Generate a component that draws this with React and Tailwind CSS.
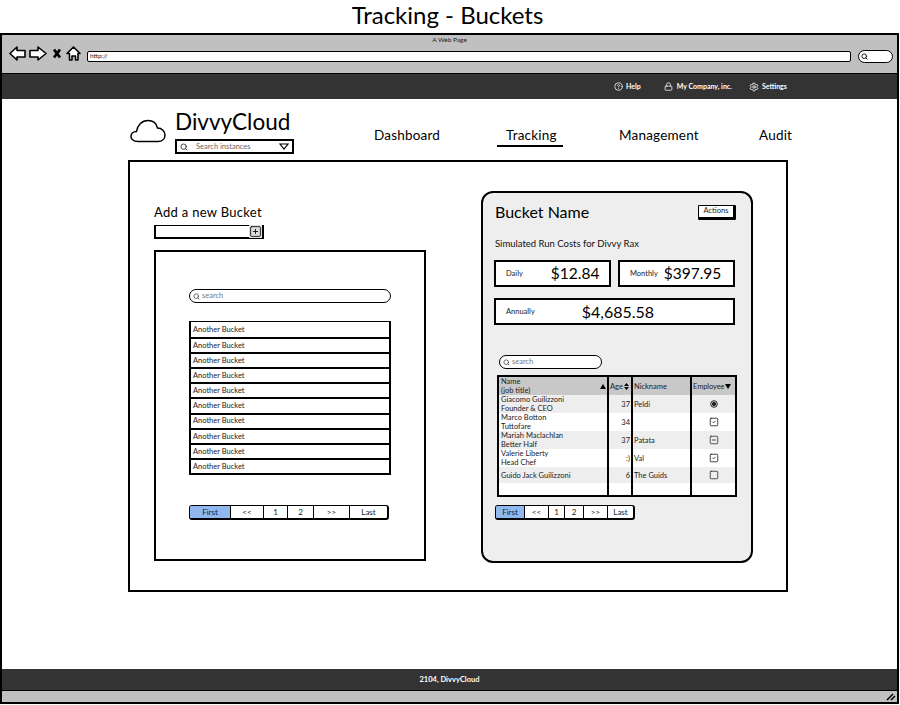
import { CircleHelp, Lock, Search, Settings, Square, SquareCheck, SquareMinus, SquarePlus } from 'lucide-react';

const navItems = [
  { label: 'Dashboard', className: 'w-[132px]' },
  { label: 'Tracking', className: 'w-[113px]' },
  { label: 'Management', className: 'w-[140px]' },
  { label: 'Audit', className: 'w-[31px]' },
];

const people = [
  { name: 'Giacomo Guilizzoni', role: 'Founder & CEO', age: '37', nick: 'Peldi', icon: 'radio', shaded: true },
  { name: 'Marco Botton', role: 'Tuttofare', age: '34', nick: '', icon: 'check' },
  { name: 'Mariah Maclachlan', role: 'Better Half', age: '37', nick: 'Patata', icon: 'minus', shaded: true },
  { name: 'Valerie Liberty', role: 'Head Chef', age: ':)', nick: 'Val', icon: 'check' },
  { name: 'Guido Jack Guilizzoni', role: '', age: '6', nick: 'The Guids', icon: 'empty', shaded: true, short: true },
];

const bigPager = [
  { label: 'First', className: 'w-[40px]' },
  { label: '<<', className: 'w-[33px]' },
  { label: '1', className: 'w-[24px]' },
  { label: '2', className: 'w-[26px]' },
  { label: '>>', className: 'w-[36px]' },
  { label: 'Last', className: 'w-[38px]' },
];

const smallPager = [
  { label: 'First', className: 'w-[28px]' },
  { label: '<<', className: 'w-[24px]' },
  { label: '1', className: 'w-[16px]' },
  { label: '2', className: 'w-[19px]' },
  { label: '>>', className: 'w-[24px]' },
  { label: 'Last', className: 'w-[26px]' },
];

const Pager = ({ items, className }) => (
  <div className={`flex w-fit h-[15px] rounded-[3px] border border-black border-b-2 border-r-2 bg-white overflow-hidden text-[8px] text-[#222] ${className}`}>
    {items.map((item, index) => (
      <div
        key={item.label}
        className={`flex items-center justify-center ${item.className} ${index === 0 ? 'bg-[#8fb8ee]' : 'border-l border-black'}`}
      >
        {item.label}
      </div>
    ))}
  </div>
);

const SearchPill = ({ className }) => (
  <div className={`flex items-center gap-[2px] h-[14px] rounded-full border-[1.5px] border-black bg-white pl-[3px] text-[7.5px] text-[#777] ${className}`}>
    <Search size={7} strokeWidth={2.5} className="text-[#444]" />
    <span>search</span>
  </div>
);

const StatBox = ({ label, value, className, valueClass }) => (
  <div className={`flex items-center border-2 border-black bg-white h-[27px] ${className}`}>
    <span className="text-[7.5px] text-[#222]">{label}</span>
    <span className={`text-black ${valueClass}`}>{value}</span>
  </div>
);

const StateIcon = ({ type }) => {
  if (type === 'radio') {
    return (
      <svg width="8" height="8" viewBox="0 0 8 8" fill="none" stroke="#222" strokeWidth="1">
        <circle cx="4" cy="4" r="3.300" />
        <circle cx="4" cy="4" r="1.700" fill="#222" />
      </svg>
    );
  }
  if (type === 'check') return <SquareCheck size={10} strokeWidth={2} />;
  if (type === 'minus') return <SquareMinus size={10} strokeWidth={1.8} />;
  return <Square size={10} strokeWidth={1.8} />;
};

const BrowserChrome = () => (
  <div className="relative h-[39px] bg-[#c0c0c0] border-b border-black shrink-0">
    <div className="pt-[1px] text-center text-[6.5px] leading-[8px] text-[#222]">A Web Page</div>
    <div className="flex items-start pl-[7px] pr-[4px] pt-[1px]">
      <svg width="72" height="17" viewBox="0 0 72 17" fill="white" stroke="black" strokeWidth="1.6" strokeLinejoin="round" className="shrink-0">
        <path d="M1 8.500 8 2v3.500h8v6.500H8v3z" />
        <path d="M37 8.500 29 2v3.500h-8v6.500h8v3z" />
        <path d="M45 4.500l6 8M51 4.500l-6 8" fill="none" strokeWidth="2.8" />
        <path d="M58 8.500 64.500 2 71 8.500h-2v6.500h-2.500v-4h-3.500v4h-2.500V8.500z" />
      </svg>
      <div className="ml-[6px] mt-[6px] flex-1 h-[11px] rounded-[2px] border-[1.5px] border-black bg-white pl-[2px] text-[6.5px] leading-[7px] text-[#222]">
        http://
      </div>
      <div className="ml-[7px] mt-[5px] flex items-center w-[35px] h-[13px] rounded-full border-[1.5px] border-black bg-white pl-[2px]">
        <Search size={7} strokeWidth={3} />
      </div>
    </div>
  </div>
);

const TopBar = () => (
  <div className="flex items-center h-[25px] bg-[#333] pl-[612px] text-[7px] font-bold text-white shrink-0">
    <CircleHelp size={9} />
    <span className="ml-[3px]">Help</span>
    <Lock size={9} className="ml-[23px]" />
    <span className="ml-[4px]">My Company, inc.</span>
    <Settings size={10} className="ml-[17px]" />
    <span className="ml-[3px]">Settings</span>
  </div>
);

const Logo = () => (
  <div className="flex">
    <svg width="36" height="24" viewBox="0 0 36 24" fill="none" stroke="black" strokeWidth="1.5" className="mt-[10px]">
      <path d="M8 22.500C3 22.500 1 19.500 1 17.500c0-3 2.500-5 5.500-5C7.500 6 12 1.500 18 1.500c5 0 8.500 3 9.500 7.500 4.500 0 7.500 3.500 7.500 7 0 4-3 6.500-7 6.500z" />
    </svg>
    <div className="ml-[9px] w-[119px]">
      <div className="text-[22.5px] leading-[26px] h-[26px] text-black">DivvyCloud</div>
      <div className="mt-[4px] flex items-center w-[119px] h-[15px] border-2 border-black bg-white pl-[3px] pr-[3px] text-[7.5px] text-[#666]">
        <Search size={8} strokeWidth={2.5} className="text-[#222]" />
        <span className="ml-[8px] flex-1">Search instances</span>
        <svg width="10" height="7" viewBox="0 0 10 7" fill="none" stroke="black" strokeWidth="1.2">
          <path d="M1 1h8L5 6z" />
        </svg>
      </div>
    </div>
  </div>
);

const Nav = () => (
  <div className="ml-[80px] flex pt-[28px] text-[13.5px] leading-[16px] tracking-[0.2px] text-black">
    {navItems.map((item) => (
      <div key={item.label} className={`relative whitespace-nowrap ${item.className}`}>
        {item.label}
        {item.label === 'Tracking' && (
          <div className="absolute left-[-9px] top-[18px] w-[66px] h-[1.5px] bg-black" />
        )}
      </div>
    ))}
  </div>
);

const LeftColumn = () => (
  <div className="w-[272px] pt-[42px] shrink-0">
    <div className="text-[13px] leading-[16px] tracking-[0.3px] text-black">Add a new Bucket</div>
    <div className="mt-[5px] flex items-center justify-end w-[110px] h-[14px] border-2 border-black border-t-[1.5px] bg-white">
      <SquarePlus size={13} strokeWidth={1.5} className="bg-[#ddd]" />
    </div>
    <div className="mt-[11px] h-[311px] border-2 border-black bg-white pl-[33px] pt-[37px]">
      <SearchPill className="w-[202px]" />
      <div className="mt-[18px] w-[202px] border-2 border-black border-t-[1.5px]">
        {Array.from({ length: 10 }).map((_, index) => (
          <div
            key={index}
            className={`flex items-center h-[15.1px] pl-[2px] text-[7.5px] text-[#222] ${index > 0 ? 'border-t-2 border-black' : ''}`}
          >
            Another Bucket
          </div>
        ))}
      </div>
      <Pager items={bigPager} className="mt-[30px]" />
    </div>
  </div>
);

const PeopleTable = () => (
  <div className="ml-[14px] mt-[6px] w-[240px] h-[122px] border-2 border-black bg-white text-[7.5px] leading-[9px] text-[#222] overflow-hidden">
    <div className="grid grid-cols-[110px_24px_59px_43px] h-[18px] bg-[#c8c8c8]">
      <div className="relative border-r-2 border-black pl-[2px]">
        Name
        <br />
        (job title)
        <svg width="6" height="5" viewBox="0 0 6 5" fill="black" className="absolute right-[1px] top-[7px]">
          <path d="M3 0l3 5H0z" />
        </svg>
      </div>
      <div className="flex items-center border-r-2 border-black pl-[1px]">
        Age
        <svg width="5" height="7" viewBox="0 0 5 7" fill="black" className="ml-[1px]">
          <path d="M2.500 0 5 3H0zM2.500 7 5 4H0z" />
        </svg>
      </div>
      <div className="flex items-center border-r-2 border-black pl-[1px]">Nickname</div>
      <div className="flex items-center pl-[1px] tracking-[-0.1px]">
        Employee
        <svg width="6" height="5" viewBox="0 0 6 5" fill="black" className="ml-[1px]">
          <path d="M3 5l3-5H0z" />
        </svg>
      </div>
    </div>
    {people.map((person) => (
      <div
        key={person.name}
        className={`grid grid-cols-[110px_24px_59px_43px] ${person.short ? 'h-[16px]' : 'h-[18px]'} ${person.shaded ? 'bg-[#eeeeee]' : 'bg-white'}`}
      >
        <div className={`border-r-2 border-black pl-[2px] ${person.short ? 'flex items-center' : ''}`}>
          {person.name}
          {person.role && <br />}
          {person.role}
        </div>
        <div className="flex items-center justify-end border-r-2 border-black pr-[1px]">{person.age}</div>
        <div className="flex items-center border-r-2 border-black pl-[1px]">{person.nick}</div>
        <div className="flex items-center justify-center">
          <StateIcon type={person.icon} />
        </div>
      </div>
    ))}
    <div className="grid grid-cols-[110px_24px_59px_43px] h-[14px]">
      <div className="border-r-2 border-black" />
      <div className="border-r-2 border-black" />
      <div className="border-r-2 border-black" />
      <div />
    </div>
  </div>
);

const BucketPanel = () => (
  <div className="ml-[55px] mt-[29px] w-[272px] h-[372px] rounded-[12px] border-2 border-black bg-[#eeeeee] shrink-0">
    <div className="flex items-center justify-between pl-[12px] pr-[15px] pt-[10px]">
      <span className="text-[16px] leading-[18px] text-black">Bucket Name</span>
      <div className="flex items-center justify-center w-[38px] h-[15px] border border-black border-b-[3px] border-r-[3px] rounded-[1px] bg-white text-[7.5px] text-[#222]">
        Actions
      </div>
    </div>
    <div className="mt-[17px] pl-[12px] text-[9.5px] leading-[12px] text-[#111]">
      Simulated Run Costs for Divvy Rax
    </div>
    <div className="mt-[10px] flex gap-[7px] pl-[11px]">
      <StatBox label="Daily" value="$12.84" className="w-[117px] pl-[10px]" valueClass="ml-[28px] text-[15.5px]" />
      <StatBox label="Monthly" value="$397.95" className="w-[117px] pl-[10px]" valueClass="ml-[6px] text-[15.5px]" />
    </div>
    <StatBox label="Annually" value="$4,685.58" className="mt-[11px] ml-[11px] w-[241px] pl-[10px]" valueClass="ml-[47px] text-[16px]" />
    <SearchPill className="mt-[30px] ml-[16px] w-[103px]" />
    <PeopleTable />
    <Pager items={smallPager} className="mt-[8px] ml-[12px]" />
  </div>
);

export default function App() {
  return (
    <div className="w-[900px] h-[705px] bg-white overflow-hidden font-['Lato','Liberation_Sans',sans-serif]">
      <div className="h-[33px] pr-[5px] text-center text-[24px] leading-[29px] text-black">
        Tracking - Buckets
      </div>
      <div className="flex flex-col w-[899px] h-[671px] border-2 border-black bg-white">
        <BrowserChrome />
        <TopBar />
        <div className="flex-1 pl-[126px]">
          <div className="flex h-[61px]">
            <div className="pl-[2px] mt-[10px]">
              <Logo />
            </div>
            <Nav />
          </div>
          <div className="flex w-[660px] h-[432px] border-2 border-black bg-white pl-[24px]">
            <LeftColumn />
            <BucketPanel />
          </div>
        </div>
        <div className="flex items-center justify-center h-[21px] bg-[#333] text-[7.5px] font-bold text-white shrink-0">
          2104, DivvyCloud
        </div>
        <div className="flex items-center justify-end h-[12px] bg-[#c0c0c0] border-t border-black pr-[1px] shrink-0">
          <svg width="10" height="9" viewBox="0 0 10 9" stroke="black" strokeWidth="1.5">
            <path d="M1 8 7 2M5 8l4-4" />
          </svg>
        </div>
      </div>
    </div>
  );
}
